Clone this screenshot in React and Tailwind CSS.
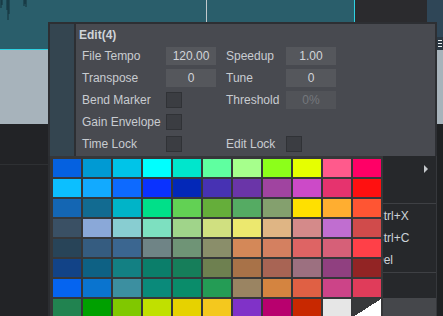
import React from 'react';

const swatches = [
  ['#0561e0', '#009ad3', '#00c4e8', '#00ffff', '#00e6cc', '#5fffa0', '#a6ff8c', '#8cff1a', '#e6ff00', '#ff5a8c', '#ff0066'],
  ['#0cbfff', '#12aaff', '#0d6aff', '#0a32ff', '#0328b8', '#4732b3', '#6a35a8', '#a044a0', '#cc4ac8', '#e6336e', '#ff1010'],
  ['#1466b3', '#126b91', '#00b4c8', '#00e089', '#62d154', '#65ae3a', '#55ab63', '#84a06e', '#ffe000', '#ffae30', '#ff5533'],
  ['#3a5064', '#8aa8d8', '#88cdd1', '#7de0c0', '#a0d48a', '#d0e080', '#ece86e', '#dfb584', '#d48a8a', '#c06ed0', '#d04b4b'],
  ['#284458', '#355c80', '#3b6690', '#6f8486', '#6f9476', '#8a8e6a', '#d48858', '#d48060', '#de6464', '#d66078', '#ff4048'],
  ['#124387', '#0e6184', '#138083', '#0b7e6a', '#167e5a', '#6e8050', '#a87248', '#a86454', '#9c7080', '#904080', '#922424'],
  ['#0564f0', '#0a74cf', '#3c8fa0', '#0a8a7a', '#0a8c6a', '#249c55', '#9a8462', '#d48440', '#e06044', '#cc4488', '#e03c5a'],
  ['#218350', '#00a000', '#80c800', '#c0e000', '#e6d200', '#f4c81e', '#8032c8', '#b8006e', '#c82800', '#e6e6e6', null],
];

function Field({ value, dim }) {
  return (
    <div
      className={`w-[50px] h-[18px] flex items-center justify-center bg-[#55575c] text-[12px] ${
        dim ? 'text-[#75787d] bg-[#515358]' : 'text-[#d2d5d9]'
      }`}
    >
      {value}
    </div>
  );
}

function Check() {
  return <div className="w-[16px] h-[16px] bg-[#3b3d42] border border-[#303236]" />;
}

function Row({ label, control, label2, control2 }) {
  return (
    <div className="h-[22px] flex items-center pl-[6px]">
      <span className="w-[84px] text-[12px] text-[#c8ccd1] whitespace-nowrap">{label}</span>
      <div className="w-[50px]">{control}</div>
      <span className="ml-[10px] w-[60px] text-[12px] text-[#c8ccd1] whitespace-nowrap">{label2}</span>
      <div className="w-[50px]">{control2}</div>
    </div>
  );
}

export default function App() {
  return (
    <div className="relative w-[443px] h-[316px] overflow-hidden bg-[#222326] font-['Liberation_Sans',Arial,sans-serif]">
      {/* track area behind */}
      <div className="flex h-full">
        <div className="w-[355px] flex flex-col">
          <div className="h-[49px] flex">
            <div className="w-[206px] bg-[#2a5e6b]">
              <svg width="40" height="22" viewBox="0 0 40 22">
                <path d="M1 0V8M2 0V5M8 0V20M9 0V14M7 0V10M24 0V6M25 0V4M26 0V7" stroke="#12303a" strokeWidth="1" />
              </svg>
            </div>
            <div className="w-px bg-[#c2c9cc]" />
            <div className="flex-1 bg-[#2a5e6b]" />
            <div className="w-px bg-[#2fd2e2]" />
          </div>
          <div className="h-px bg-[#2fd2e2]" />
          <div className="h-[74px] bg-[#a7b3bb]" />
          <div className="flex-1 bg-[#222326]">
            <div className="mt-[40px] h-px bg-[#2e3033]" />
          </div>
        </div>
        <div className="w-[72px] bg-[#2b2b2e]" />
        <div className="flex-1 flex flex-col">
          <div className="h-[37px] bg-[#2f4657]" />
          <div className="h-[13px] bg-[#2a3742] flex flex-col gap-[2px] pl-[11px] pt-[3px]">
            <div className="w-[4px] h-px bg-[#e8ecee]" />
            <div className="w-[4px] h-px bg-[#e8ecee]" />
            <div className="w-[4px] h-px bg-[#e8ecee]" />
          </div>
          <div className="h-[74px] bg-[#a7b3bb]" />
          <div className="flex-1 bg-[#1f2123]" />
        </div>
      </div>

      {/* context menu partly behind popup */}
      <div className="absolute left-[290px] top-[156px] w-[147px] bottom-0 bg-[#26282b] border-r border-[#36383c] text-[12px] text-[#cdd3d9]">
        <div className="h-[24px] flex items-center justify-end pr-[8px] pt-[2px]">
          <div className="w-0 h-0 border-y-[4px] border-y-transparent border-l-[4px] border-l-[#c4c8cc]" />
        </div>
        <div className="h-[22px]" />
        <div className="h-[3px] pt-px">
          <div className="h-px bg-[#3e4044]" />
        </div>
        <div className="h-[22px] flex items-center pl-[85px]">Ctrl+X</div>
        <div className="h-[22px] flex items-center pl-[85px]">Ctrl+C</div>
        <div className="h-[22px] flex items-center pl-[85px]">Del</div>
        <div className="h-[3px] pt-px">
          <div className="h-px bg-[#3e4044]" />
        </div>
        <div className="h-[24px]" />
        <div className="h-[22px] bg-[#45474b]" />
      </div>

      {/* edit popup */}
      <div className="absolute left-[48px] top-[22px] flex flex-col items-start">
        <div className="w-[389px] h-[134px] flex border-2 border-b-0 border-[#2d2f33]">
          <div className="w-[26px] bg-[#344550] border-r-2 border-[#2d2f33]" />
          <div className="flex-1 bg-[#484a50]">
            <div className="pt-[4px] pl-[3px] h-[21px] text-[12px] leading-[14px] font-bold text-[#d0d4d8]">Edit(4)</div>
            <Row label="File Tempo" control={<Field value="120.00" />} label2="Speedup" control2={<Field value="1.00" />} />
            <Row label="Transpose" control={<Field value="0" />} label2="Tune" control2={<Field value="0" />} />
            <Row label="Bend Marker" control={<Check />} label2="Threshold" control2={<Field value="0%" dim />} />
            <Row label="Gain Envelope" control={<Check />} />
            <Row label="Time Lock" control={<Check />} label2="Edit Lock" control2={<Check />} />
          </div>
        </div>
        <div className="w-[335px] h-[180px] bg-[#363739] border-l-2 border-[#2b2d31] pl-[3px] pt-[3px] grid grid-cols-[repeat(11,28px)] auto-rows-[18px] gap-[2px]">
          {swatches.flat().map((c, i) =>
            c ? (
              <div key={i} style={{ backgroundColor: c }} />
            ) : (
              <div key={i} className="bg-[linear-gradient(to_bottom_right,#38393b_50%,#ffffff_50%)]" />
            )
          )}
        </div>
      </div>
    </div>
  );
}
